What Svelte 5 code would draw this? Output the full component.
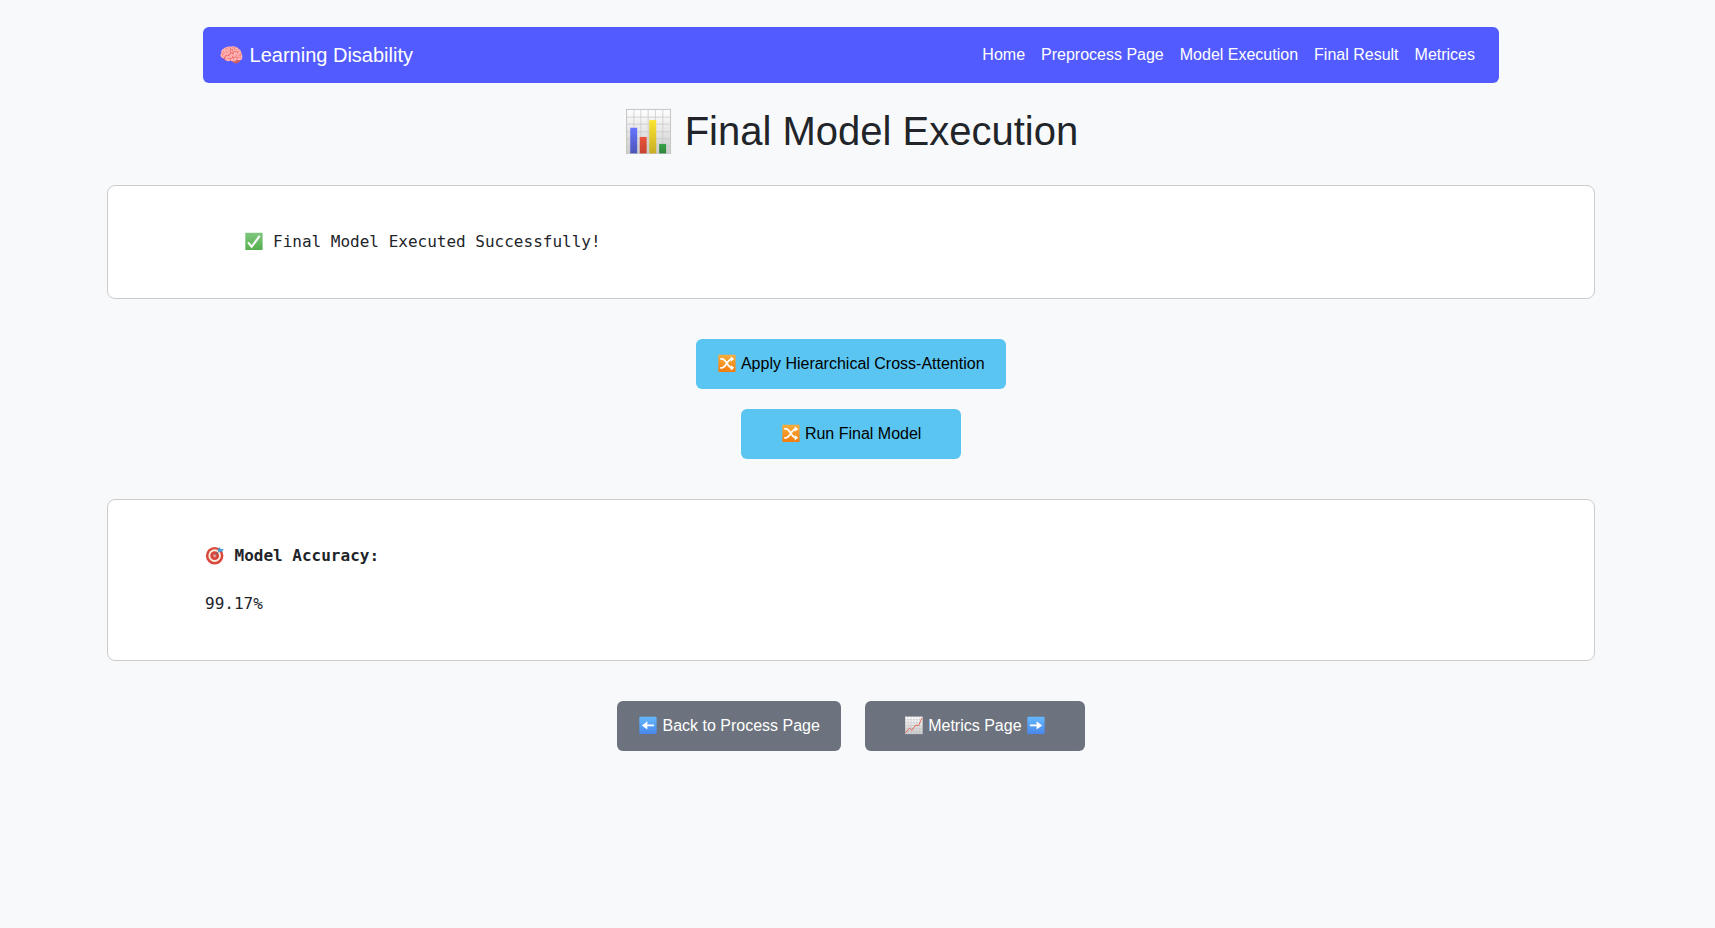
<script>
  const links = ['Home', 'Preprocess Page', 'Model Execution', 'Final Result', 'Metrices'];
</script>

{#snippet shuffle()}
  <svg class="icon" viewBox="0 0 136 128" aria-hidden="true">
    <rect x="9" y="5" width="118" height="118" rx="5" fill="url(#orange)" />
    <path d="M22 34h13c25 0 39 60 67 60M22 94h13c25 0 39-60 67-60" fill="none" stroke="#fff" stroke-width="12" />
    <path d="M94 15l24 19-24 19zM94 75l24 19-24 19z" fill="#fff" />
  </svg>
{/snippet}

{#snippet arrow(right)}
  <svg class="icon" viewBox="0 0 136 128" aria-hidden="true">
    <rect x="9" y="5" width="118" height="118" rx="5" fill="url(#blue)" />
    <path d={right ? 'M27 58h45V36l38 28-38 28V70H27z' : 'M109 58H64V36L26 64l38 28V70h45z'} fill="#fff" />
  </svg>
{/snippet}

<svg class="defs" width="0" height="0" aria-hidden="true">
  <defs>
    <linearGradient id="orange" x2="0" y2="1"><stop stop-color="#f7ae3c" /><stop offset="1" stop-color="#f07c0c" /></linearGradient>
    <linearGradient id="blue" x2="0" y2="1"><stop stop-color="#65b9ff" /><stop offset="1" stop-color="#4986ea" /></linearGradient>
    <linearGradient id="green" x2="0" y2="1"><stop stop-color="#7fc77f" /><stop offset="1" stop-color="#55b04c" /></linearGradient>
    <linearGradient id="paper" x2="0" y2="1"><stop stop-color="#fff" /><stop offset="1" stop-color="#ccc" /></linearGradient>
    <linearGradient id="bar1" x2="0" y2="1"><stop stop-color="#6574ff" /><stop offset="1" stop-color="#4c56b9" /></linearGradient>
    <linearGradient id="bar2" x2="0" y2="1"><stop stop-color="#e95339" /><stop offset="1" stop-color="#c74431" /></linearGradient>
    <linearGradient id="bar3" x2="0" y2="1"><stop stop-color="#fbe52f" /><stop offset="1" stop-color="#c8ae24" /></linearGradient>
    <linearGradient id="bar4" x2="0" y2="1"><stop stop-color="#37a449" /><stop offset="1" stop-color="#31843e" /></linearGradient>
  </defs>
</svg>

<main>
  <nav>
    <a class="brand" href="#home">🧠 Learning Disability</a>
    <div class="links">
      {#each links as link}<a href="#page">{link}</a>{/each}
    </div>
  </nav>
  <h1><svg class="icon" viewBox="0 0 136 128" aria-hidden="true">
    <rect x="7" y="4" width="120" height="120" fill="url(#paper)" stroke="#c8c8c8" stroke-width="3" />
    <path d="M27 5v118M46 5v118M66 5v118M86 5v118M106 5v118M8 25h118M8 44h118M8 65h118M8 84h118M8 104h118" stroke="#c7c7c7" stroke-width="2" />
    <path d="M17 54h19v70H17z" fill="url(#bar1)" />
    <path d="M43 79h19v45H43z" fill="url(#bar2)" />
    <path d="M69 33h19v91H69z" fill="url(#bar3)" />
    <path d="M96 98h19v26H96z" fill="url(#bar4)" />
  </svg> Final Model Execution</h1>
  <section class="status"><svg class="icon" viewBox="0 0 136 128" aria-hidden="true">
    <rect x="9" y="5" width="118" height="118" rx="4" fill="url(#green)" />
    <path d="M28 71l24 30 55-75" fill="none" stroke="#f7f9f7" stroke-width="15" />
  </svg> Final Model Executed Successfully!</section>
  <div class="actions">
    <button>{@render shuffle()} Apply Hierarchical Cross-Attention</button>
    <button class="fixed">{@render shuffle()} Run Final Model</button>
  </div>
  <section class="accuracy">
    <strong><svg class="icon" viewBox="0 0 136 128" aria-hidden="true">
      <circle cx="66" cy="66" r="60" fill="#d9473c" />
      <circle cx="66" cy="66" r="43" fill="#f7eddb" />
      <circle cx="66" cy="66" r="30" fill="#d9473c" />
      <circle cx="66" cy="66" r="10" fill="#e8aaa2" />
      <path d="M67 65l31-32" stroke="#477ca0" stroke-width="6" />
      <path d="M85 28L101 6l7 16 20-2-10 17-20 4z" fill="#409ed5" />
    </svg> Model Accuracy:</strong>
    <span>99.17%</span>
  </section>
  <div class="pager">
    <button>{@render arrow(false)} Back to Process Page</button>
    <button class="fixed"><svg class="icon" viewBox="0 0 136 128" aria-hidden="true">
      <rect x="8" y="5" width="119" height="118" fill="url(#paper)" stroke="#c5c5c5" stroke-width="2" />
      <path d="M28 5v118M48 5v118M68 5v118M88 5v118M108 5v118M8 25h118M8 45h118M8 65h118M8 85h118M8 105h118" stroke="#bcbcbc" stroke-width="3" />
      <path d="M10 115l28-32 16 15 25-36 20 4 25-54" fill="none" stroke="#e25b4b" stroke-width="6" />
    </svg> Metrics Page {@render arrow(true)}</button>
  </div>
</main>

<style>
  :global(body) { margin: 0; background: #f8f9fb; }
  .defs { position: absolute; }
  .icon { width: 1.245em; height: 1.172em; vertical-align: -0.24em; }
  main { box-sizing: border-box; min-height: 928px; padding: 27px 13px 0 0; color: #212529; font: 16px/24px "Liberation Sans", Arial, sans-serif; display: flex; flex-direction: column; align-items: center; }
  nav { box-sizing: border-box; width: 1296px; height: 56px; padding: 0 16px; background: #525bff; border-radius: 6px; display: flex; align-items: center; justify-content: space-between; }
  a { color: #fff; text-decoration: none; }
  .brand { font-size: 20px; line-height: 30px; }
  .links { display: flex; }
  .links a { padding: 8px; }
  h1 { margin: 24px 0 30px; height: 48px; font-size: 40px; line-height: 48px; font-weight: 500; }
  section { box-sizing: border-box; width: 1488px; background: #fff; border: 1px solid #ccc; border-radius: 8px; font-family: "DejaVu Sans Mono", monospace; }
  .status { height: 114px; padding: 44px 0 0 135.5px; }
  .actions { margin: 40px 0; display: flex; flex-direction: column; align-items: center; gap: 20px; }
  button { box-sizing: border-box; height: 50px; padding: 12px 21px; border: 0; border-radius: 6px; background: #5bc5f2; color: #000; font: inherit; white-space: nowrap; }
  .fixed { width: 220px; }
  .accuracy { height: 162px; padding: 44px 0 0 97px; display: flex; flex-direction: column; gap: 24px; }
  .accuracy > * { height: 24px; }
  .pager { margin-top: 40px; display: flex; gap: 24px; }
  .pager button { background: #6c737e; color: #fff; }
</style>
